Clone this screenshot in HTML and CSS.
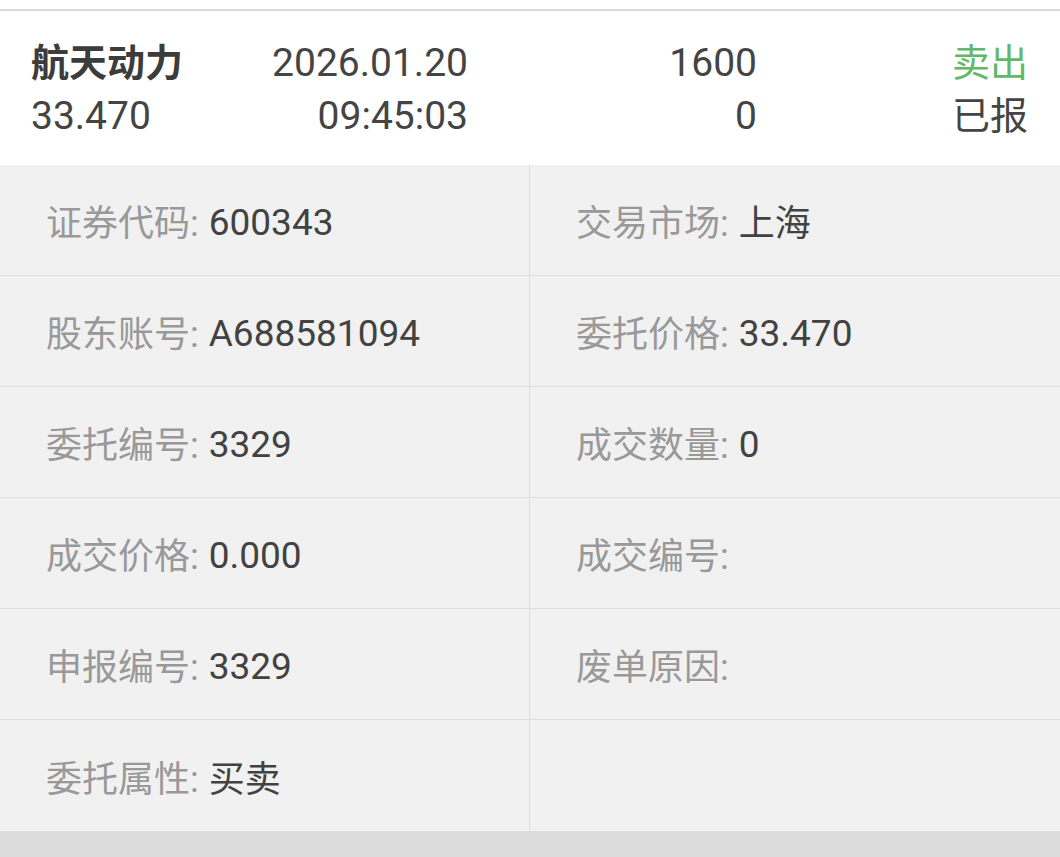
FILE: index.html
```html
<!DOCTYPE html>
<html lang="zh-CN">
<head>
<meta charset="utf-8">
<title>委托详情</title>
<link rel="stylesheet" href="styles.css">
</head>
<body>
<div class="page">
  <div class="summary">
    <div class="col c1">
      <div class="line name">航天动力</div>
      <div class="line">33.470</div>
    </div>
    <div class="col c2">
      <div class="line">2026.01.20</div>
      <div class="line">09:45:03</div>
    </div>
    <div class="col c3">
      <div class="line">1600</div>
      <div class="line">0</div>
    </div>
    <div class="col c4">
      <div class="line sell">卖出</div>
      <div class="line">已报</div>
    </div>
  </div>
  <div class="details">
    <div class="cell"><span class="label">证券代码:</span><span class="value num">600343</span></div>
    <div class="cell right"><span class="label">交易市场:</span><span class="value">上海</span></div>
    <div class="cell"><span class="label">股东账号:</span><span class="value num">A688581094</span></div>
    <div class="cell right"><span class="label">委托价格:</span><span class="value num">33.470</span></div>
    <div class="cell"><span class="label">委托编号:</span><span class="value num">3329</span></div>
    <div class="cell right"><span class="label">成交数量:</span><span class="value num">0</span></div>
    <div class="cell"><span class="label">成交价格:</span><span class="value num">0.000</span></div>
    <div class="cell right"><span class="label">成交编号:</span><span class="value"></span></div>
    <div class="cell"><span class="label">申报编号:</span><span class="value num">3329</span></div>
    <div class="cell right"><span class="label">废单原因:</span><span class="value"></span></div>
    <div class="cell"><span class="label">委托属性:</span><span class="value">买卖</span></div>
    <div class="cell right"></div>
  </div>
  <div class="footer"></div>
</div>
</body>
</html>
```

FILE: styles.css
```css
html, body {
  margin: 0;
  padding: 0;
  background: #ffffff;
}
body {
  font-family: Roboto, "Noto Sans CJK SC", sans-serif;
  width: 1060px;
  height: 857px;
  overflow: hidden;
}
.page {
  padding-top: 9px;
  display: flex;
  flex-direction: column;
}
.summary {
  border-top: 2px solid #d9d9d9;
  background: #ffffff;
  display: grid;
  grid-template-columns: 169px 268px 289px 271px;
  padding: 26px 32px 23px 31px;
  height: 105px;
  font-size: 39px;
  color: #444444;
}
.col {
  display: flex;
  flex-direction: column;
}
.c2, .c3, .c4 {
  text-align: right;
}
.line {
  height: 53px;
  line-height: 53px;
  white-space: nowrap;
}
.name {
  font-weight: bold;
  font-size: 38px;
  color: #3c3c3c;
}
.c4 .line {
  font-size: 38px;
}
.sell {
  color: #62b868;
}
.details {
  display: grid;
  grid-template-columns: 529px 531px;
  grid-auto-rows: 111px;
  background: #f1f1f1;
}
.cell {
  border-bottom: 1px solid #dedede;
  display: flex;
  align-items: center;
  padding-left: 46px;
  font-size: 36px;
  gap: 10px;
}
.cell:nth-last-child(-n+2) {
  border-bottom: none;
}
.cell.right {
  border-left: 1px solid #dedede;
}
.label {
  color: #999999;
}
.value {
  color: #424242;
}
.value.num {
  font-size: 37px;
  padding-top: 5px;
}
.footer {
  height: 30px;
  background: #dcdcdc;
}
```
